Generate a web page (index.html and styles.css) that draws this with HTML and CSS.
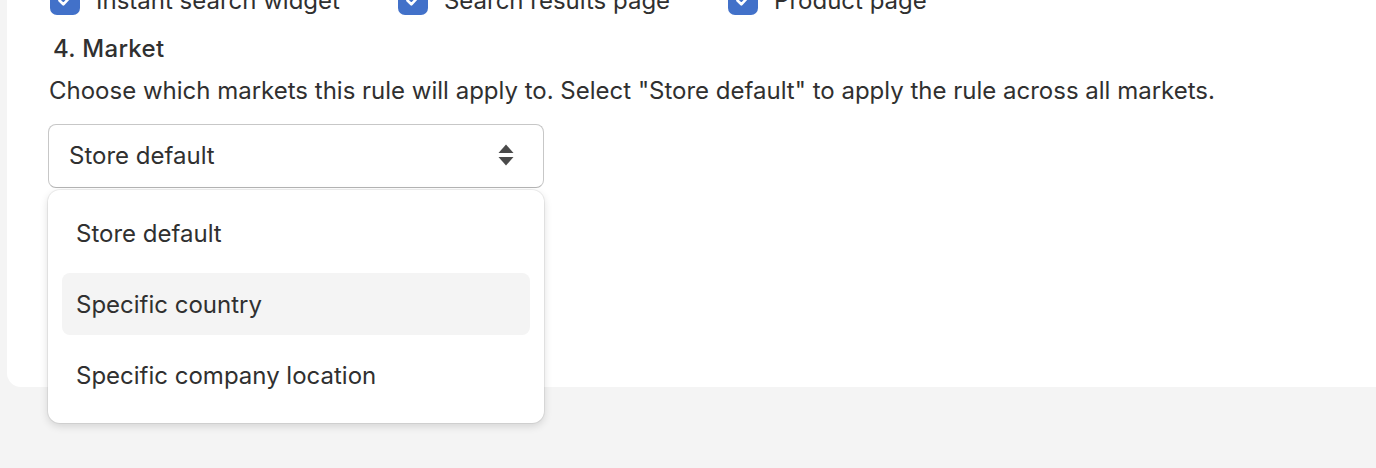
FILE: index.html
```html
<!DOCTYPE html>
<html lang="en">
<head>
<meta charset="utf-8">
<title>Market</title>
<link rel="stylesheet" href="styles.css">
</head>
<body>
<div class="page">
  <div class="card">
    <div class="checks">
      <label class="check"><span class="box"><svg viewBox="0 0 20 20" width="22" height="22"><path d="M5 9.5l3.5 3.5L15 6" fill="none" stroke="#fff" stroke-width="2.4" stroke-linecap="round" stroke-linejoin="round"/></svg></span><span>Instant search widget</span></label>
      <label class="check"><span class="box"><svg viewBox="0 0 20 20" width="22" height="22"><path d="M5 9.5l3.5 3.5L15 6" fill="none" stroke="#fff" stroke-width="2.4" stroke-linecap="round" stroke-linejoin="round"/></svg></span><span>Search results page</span></label>
      <label class="check"><span class="box"><svg viewBox="0 0 20 20" width="22" height="22"><path d="M5 9.5l3.5 3.5L15 6" fill="none" stroke="#fff" stroke-width="2.4" stroke-linecap="round" stroke-linejoin="round"/></svg></span><span>Product page</span></label>
    </div>
    <h2 class="heading">4. Market</h2>
    <p class="desc">Choose which markets this rule will apply to. Select "Store default" to apply the rule across all markets.</p>
    <div class="select-wrap">
      <div class="select">
        <span>Store default</span>
        <svg class="arrows" viewBox="0 0 18 24" width="18" height="24"><path d="M9 1.5L16.5 10H1.5z" fill="#4a4a4a"/><path d="M9 22.5L1.5 14h15z" fill="#4a4a4a"/></svg>
      </div>
      <div class="menu">
        <div class="item">Store default</div>
        <div class="item hover">Specific country</div>
        <div class="item">Specific company location</div>
      </div>
    </div>
  </div>
</div>
</body>
</html>
```

FILE: styles.css
```css
* { box-sizing: border-box; }
html, body { margin: 0; padding: 0; }
body {
  background: #f4f4f4;
  font-family: Inter, "Noto Sans", sans-serif;
  color: #303030;
  font-size: 24px;
  height: 468px;
  overflow: hidden;
}
.page { padding-left: 7px; }
.card {
  background: #fff;
  margin-top: -30px;
  padding: 16px 0 199px 41px;
  border-bottom-left-radius: 14px;
}
.checks { display: flex; height: 29px; align-items: center; }
.check { display: flex; align-items: center; gap: 16px; margin-right: 58px; line-height: 29px; }
.check:first-child { margin-left: 2px; }
.box {
  width: 30px; height: 29px; border-radius: 7px;
  background: #4271c9;
  display: flex; align-items: center; justify-content: center;
}
.heading {
  margin: 19px 0 0 5px;
  font-size: 24px; font-weight: 550; line-height: 30px;
  letter-spacing: 0.3px;
}
.desc { margin: 12px 0 0 1px; line-height: 30px; }
.select-wrap { position: relative; width: 496px; margin-top: 18px; }
.select {
  height: 64px;
  border: 1.5px solid #c7c7c7;
  border-bottom-color: #b5b5b5;
  border-radius: 8px;
  display: flex; align-items: center; justify-content: space-between;
  padding: 0 28px 2px 20px;
}
.menu {
  position: absolute; left: 0; right: 0; top: calc(100% + 2px);
  background: #fff;
  border-radius: 12px;
  box-shadow: 0 0 0 1px rgba(0,0,0,0.06), 0 3px 8px rgba(0,0,0,0.14);
  padding: 12px 14px 17px;
  display: flex; flex-direction: column; gap: 9px;
}
.item {
  height: 62px; border-radius: 8px;
  display: flex; align-items: center; padding-left: 14px;
}
.item.hover { background: #f4f4f4; }
```
